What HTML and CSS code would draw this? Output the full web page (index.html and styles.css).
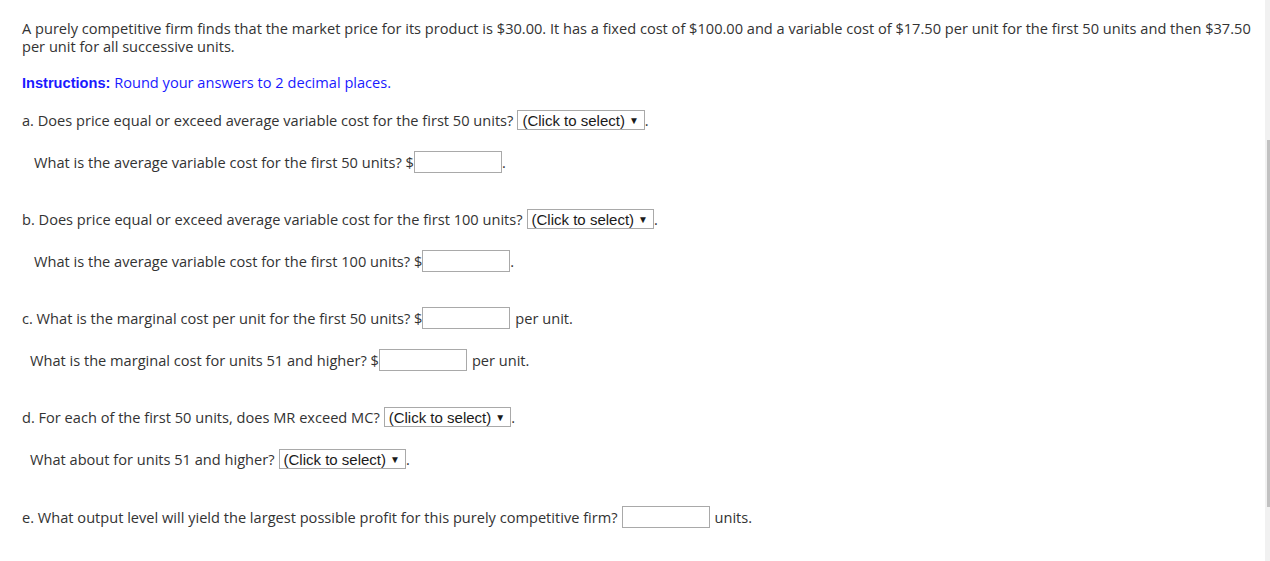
FILE: index.html
```html
<!DOCTYPE html>
<html>
<head>
<meta charset="utf-8">
<link rel="stylesheet" href="styles.css">
</head>
<body>
<div class="page">
  <p class="intro">A purely competitive firm finds that the market price for its product is $30.00. It has a fixed cost of $100.00 and a variable cost of $17.50 per unit for the first 50 units and then $37.50 per unit for all successive units.</p>
  <p class="instr"><b>Instructions:</b> Round your answers to 2 decimal places.</p>

  <div class="row q qa">a. Does price equal or exceed average variable cost for the first 50 units?<span class="sel">(Click to select) <span class="arr">▼</span></span>.</div>
  <div class="row sub ind4">What is the average variable cost for the first 50 units? $<span class="inp"></span>.</div>

  <div class="row q">b. Does price equal or exceed average variable cost for the first 100 units?<span class="sel">(Click to select) <span class="arr">▼</span></span>.</div>
  <div class="row sub ind4">What is the average variable cost for the first 100 units? $<span class="inp"></span>.</div>

  <div class="row q">c. What is the marginal cost per unit for the first 50 units? $<span class="inp"></span><span class="after">per unit.</span></div>
  <div class="row sub ind2">What is the marginal cost for units 51 and higher? $<span class="inp"></span><span class="after">per unit.</span></div>

  <div class="row q">d. For each of the first 50 units, does MR exceed MC?<span class="sel">(Click to select) <span class="arr">▼</span></span>.</div>
  <div class="row sub ind2">What about for units 51 and higher?<span class="sel">(Click to select) <span class="arr">▼</span></span>.</div>

  <div class="row q qe">e. What output level will yield the largest possible profit for this purely competitive firm?<span class="inp sp"></span><span class="after">units.</span></div>
</div>
<div class="scroll"><div class="thumb"></div></div>
</body>
</html>
```
FILE: styles.css
```css
html, body {
  margin: 0;
  padding: 0;
  background: #fff;
}
body {
  font-family: "Open Sans", Lato, sans-serif;
  font-size: 14.6px;
  color: #333;
  font-variant-ligatures: none;
}
.page {
  padding: 19px 8px 0 22px;
}
.intro {
  margin: 0;
  line-height: 18px;
}
.instr {
  margin: 18px 0 0 0;
  line-height: 18px;
  color: #1a1aff;
}
.instr b {
  font-family: "Liberation Sans", Arial, sans-serif;
  font-weight: bold;
}
.row {
  height: 22px;
  display: flex;
  align-items: center;
  white-space: nowrap;
}
.q { margin-top: 35px; }
.qa { margin-top: 17px; }
.qe { margin-top: 36px; }
.sub { margin-top: 20px; }
.ind4 { padding-left: 12px; }
.ind2 { padding-left: 8px; }
.sel {
  display: inline-flex;
  align-items: center;
  height: 18px;
  border: 1px solid #a9a9a9;
  margin-left: 4px;
  padding: 0 5px 0 4px;
  font-family: "Liberation Sans", Arial, sans-serif;
  font-size: 15px;
  color: #1a1a1a;
}
.arr {
  font-size: 10px;
  margin-left: 4px;
}
.inp {
  display: inline-block;
  width: 86px;
  height: 20px;
  border: 1px solid #a9a9a9;
  background: #fff;
}
.inp.sp { margin-left: 4px; }
.after { margin-left: 5px; }
.scroll {
  position: fixed;
  top: 0;
  right: 0;
  width: 5px;
  height: 100%;
  background: #f1f1f1;
}
.thumb {
  position: absolute;
  top: 140px;
  right: 0;
  width: 3px;
  height: 367px;
  background: #c1c1c1;
}
```
